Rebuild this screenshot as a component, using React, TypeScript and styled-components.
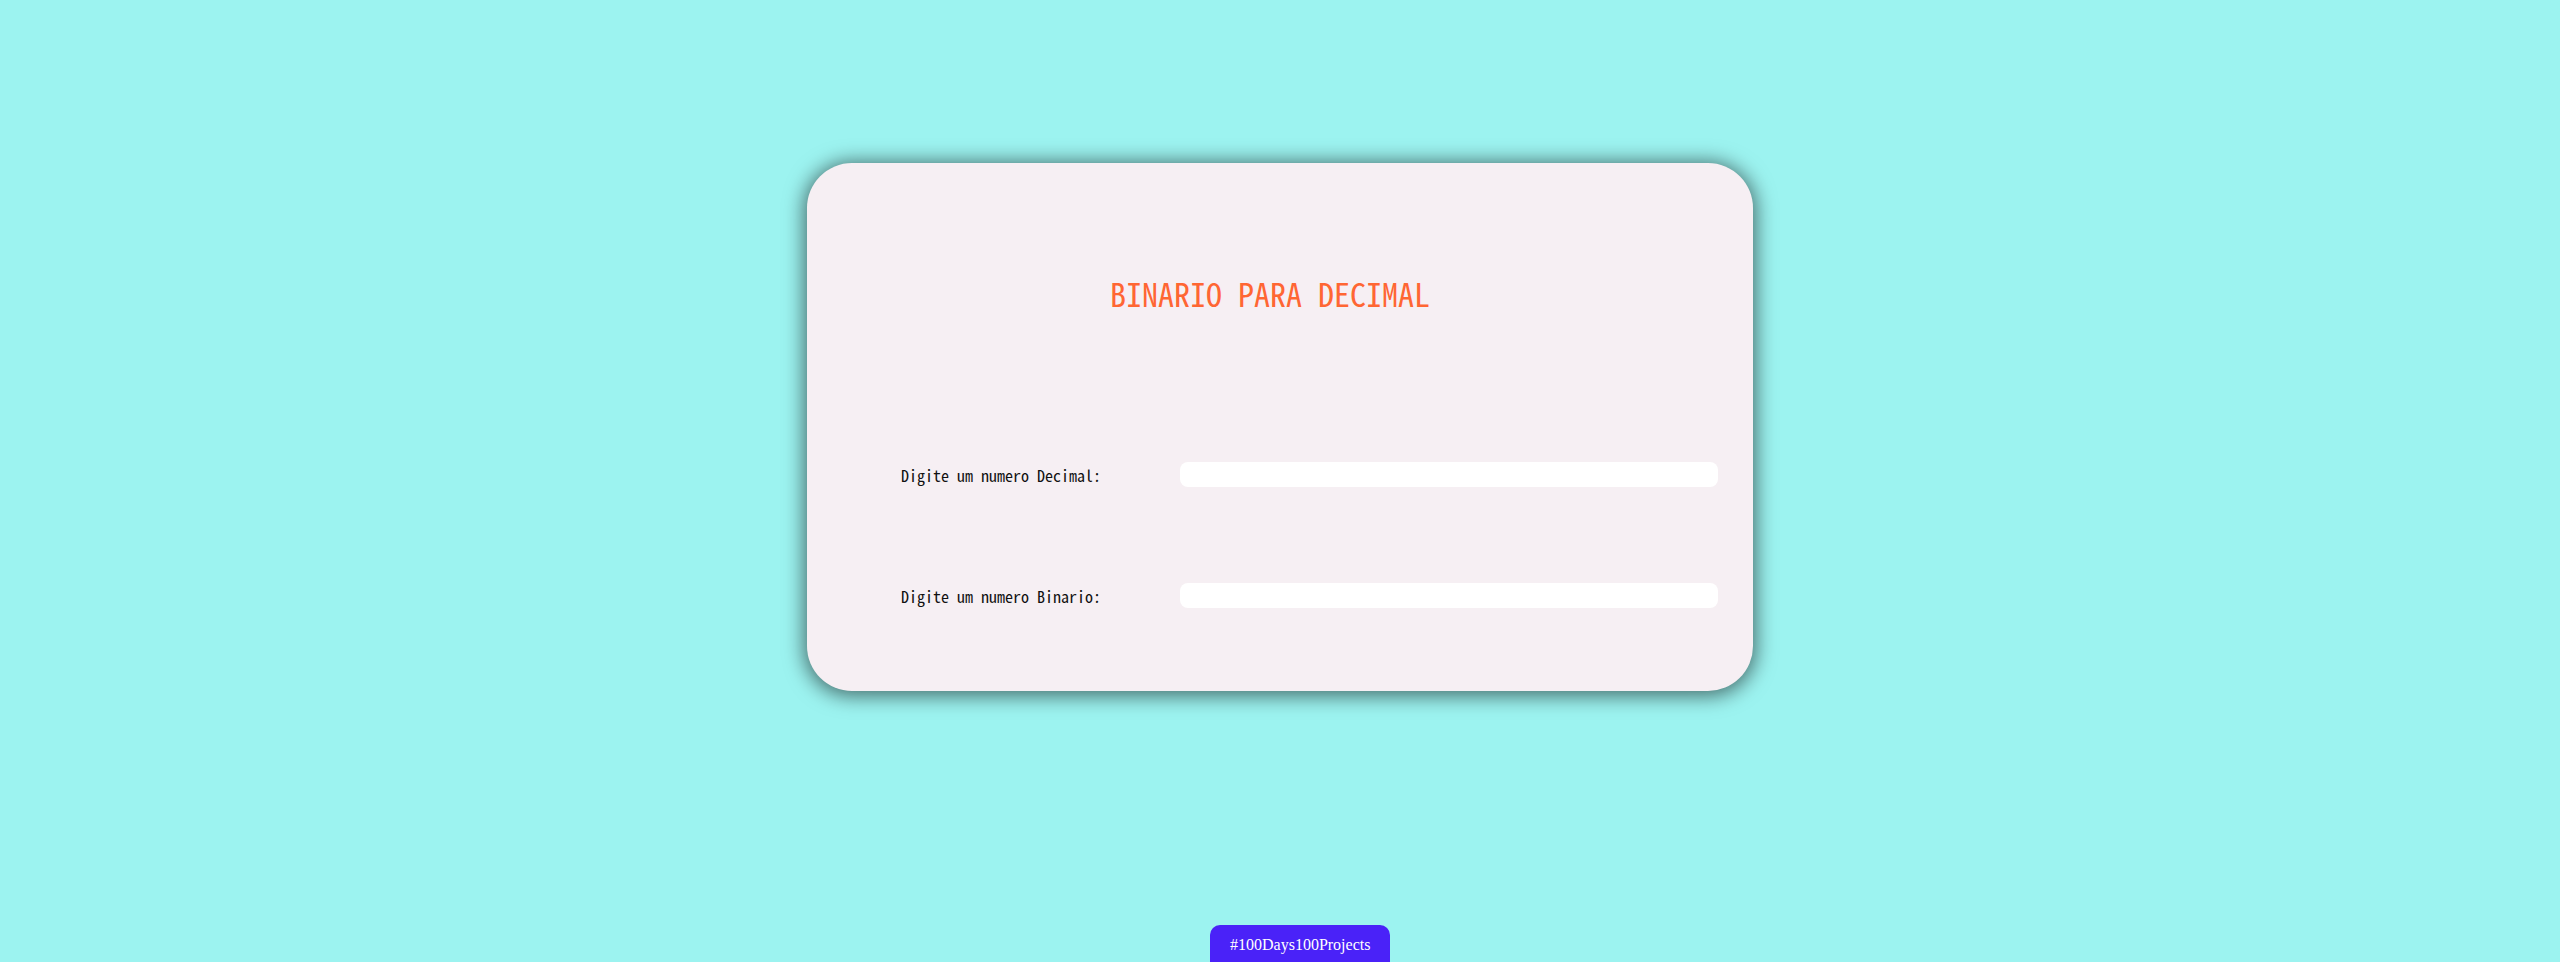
import React from "react";
import styled, { createGlobalStyle } from "styled-components";

const GlobalStyle = createGlobalStyle`
  html, body {
    margin: 0;
    padding: 0;
  }
  body {
    background: #9cf3f0;
    font-family: "Noto Sans Mono CJK JP", "Noto Sans CJK JP", monospace;
    min-height: 100vh;
  }
`;

const Page = styled.main`
  display: flex;
  justify-content: center;
  padding-top: 163px;
`;

const Card = styled.section`
  box-sizing: border-box;
  width: 946px;
  height: 528px;
  background: #f6eff3;
  border-radius: 45px;
  box-shadow: 0 2px 20px 3px rgba(0, 0, 0, 0.55);
  padding-top: 107px;
`;

const Title = styled.h1`
  margin: 0;
  padding-right: 20px;
  text-align: center;
  font-family: "Noto Sans Mono CJK JP", "Noto Sans CJK JP", monospace;
  font-weight: 400;
  font-size: 32px;
  line-height: 46px;
  color: #ff6633;
`;

const Form = styled.form`
  display: grid;
  grid-template-columns: 279px 538px;
  align-items: center;
  row-gap: 96px;
  margin-top: 146px;
  padding-left: 94px;
`;

const Label = styled.label`
  font-family: "Noto Sans Mono CJK JP", "Noto Sans CJK JP", monospace;
  font-weight: 400;
  font-size: 16px;
  color: #111;
`;

const Field = styled.input`
  box-sizing: border-box;
  height: 25px;
  width: 538px;
  border: none;
  border-radius: 8px;
  background: #ffffff;
  outline: none;
  padding: 0 8px;
`;

const Badge = styled.a`
  position: fixed;
  bottom: 0;
  left: 1210px;
  padding: 11px 20px 9px;
  border-radius: 10px 10px 0 0;
  background: #4a22f8;
  color: #ffffff;
  font-family: "Liberation Serif", "Times New Roman", serif;
  font-size: 16px;
  line-height: 17px;
  text-decoration: none;
`;

export default function App() {
  return (
    <>
      <GlobalStyle />
      <Page>
        <Card>
          <Title>BINARIO PARA DECIMAL</Title>
          <Form onSubmit={(e) => e.preventDefault()}>
            <Label htmlFor="decimal">Digite um numero Decimal:</Label>
            <Field id="decimal" type="text" />
            <Label htmlFor="binario">Digite um numero Binario:</Label>
            <Field id="binario" type="text" />
          </Form>
        </Card>
      </Page>
      <Badge href="#">#100Days100Projects</Badge>
    </>
  );
}
